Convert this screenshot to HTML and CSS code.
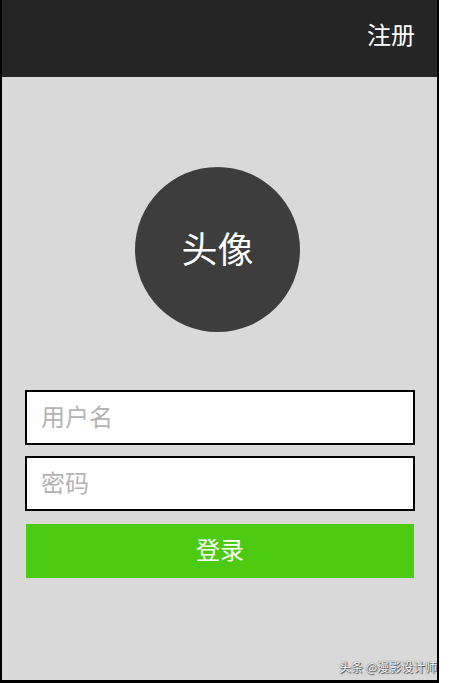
FILE: index.html
```html
<!DOCTYPE html>
<html lang="zh">
<head>
<meta charset="utf-8">
<link rel="stylesheet" href="styles.css">
</head>
<body>
<div class="frame">
  <header class="topbar">
    <span class="register">注册</span>
  </header>
  <main class="content">
    <div class="avatar"><span class="avatar-text">头像</span></div>
    <div class="field"><span class="placeholder">用户名</span></div>
    <div class="field field-second"><span class="placeholder">密码</span></div>
    <div class="login"><span class="login-text">登录</span></div>
  </main>
  <div class="watermark">头条 @漫影设计师</div>
</div>
</body>
</html>
```
FILE: styles.css
```css
html, body {
  margin: 0;
  padding: 0;
  background: #ffffff;
}
body {
  font-family: "Noto Sans CJK SC", "Noto Sans", sans-serif;
}
.frame {
  position: relative;
  box-sizing: border-box;
  width: 439px;
  height: 683px;
  border-left: 2px solid #000;
  border-right: 2px solid #000;
  border-bottom: 3px solid #000;
  background: #d9d9d9;
  display: flex;
  flex-direction: column;
  overflow: hidden;
}
.topbar {
  box-sizing: border-box;
  height: 77px;
  background: #252525;
  display: flex;
  align-items: center;
  justify-content: flex-end;
  padding-right: 22px;
  padding-bottom: 9px;
  flex-shrink: 0;
}
.register {
  color: #ffffff;
  font-size: 24px;
  line-height: 1;
}
.content {
  display: flex;
  flex-direction: column;
  padding-top: 90px;
}
.avatar {
  box-sizing: border-box;
  width: 165px;
  height: 165px;
  border-radius: 50%;
  background: #3d3d3d;
  color: #ffffff;
  font-size: 36px;
  display: flex;
  align-items: center;
  justify-content: center;
  margin-left: 133px;
  padding-bottom: 6px;
  line-height: 1;
}
.field {
  box-sizing: border-box;
  width: 390px;
  height: 55px;
  margin-left: 23px;
  margin-top: 58px;
  border: 2px solid #000;
  background: #ffffff;
  display: flex;
  align-items: center;
  padding-left: 14px;
  padding-bottom: 4px;
}
.field-second {
  margin-top: 11px;
}
.placeholder {
  color: #b3b3b3;
  font-size: 24px;
  line-height: 1;
}
.login {
  box-sizing: border-box;
  width: 388px;
  height: 54px;
  margin-left: 24px;
  margin-top: 13px;
  background: #4ccb12;
  color: #ffffff;
  font-size: 24px;
  display: flex;
  align-items: center;
  justify-content: center;
  padding-bottom: 4px;
  line-height: 1;
}
.watermark {
  position: absolute;
  right: 0;
  bottom: 5px;
  font-size: 12px;
  color: #ffffff;
  text-shadow: 0 0 1px #333, 1px 1px 1px #444;
  white-space: nowrap;
}
```
